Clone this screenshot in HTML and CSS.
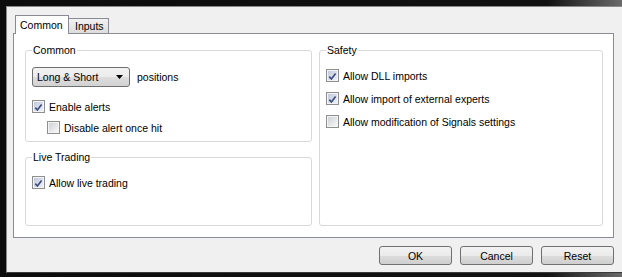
FILE: index.html
```html
<!DOCTYPE html>
<html lang="en">
<head>
    <meta charset="UTF-8">
    <meta name="viewport" content="width=device-width, initial-scale=1.0">
    <title>Expert Properties</title>
    <link rel="stylesheet" href="styles.css">
</head>
<body>
    <div class="window">
        <div class="tabs">
            <div class="tab active">Common</div>
            <div class="tab">Inputs</div>
        </div>
        <div class="panel">
            <fieldset class="group common">
                <legend>Common</legend>
                <div class="select-row">
                    <div class="select">
                        <span>Long &amp; Short</span>
                        <svg class="arrow" width="7" height="4" viewBox="0 0 7 4"><path d="M0 0H7L3.5 4Z" fill="#000"/></svg>
                    </div>
                    <span>positions</span>
                </div>
                <label class="check">
                    <span class="box checked"><svg width="9" height="9" viewBox="0 0 9 9"><path d="M1.3 4.6L3.4 7L7.6 1.6" fill="none" stroke="#3c4d80" stroke-width="1.7"/></svg></span>
                    Enable alerts
                </label>
                <label class="check indent">
                    <span class="box"></span>
                    Disable alert once hit
                </label>
            </fieldset>

            <fieldset class="group safety">
                <legend>Safety</legend>
                <label class="check tall">
                    <span class="box checked"><svg width="9" height="9" viewBox="0 0 9 9"><path d="M1.3 4.6L3.4 7L7.6 1.6" fill="none" stroke="#3c4d80" stroke-width="1.7"/></svg></span>
                    Allow DLL imports
                </label>
                <label class="check tall">
                    <span class="box checked"><svg width="9" height="9" viewBox="0 0 9 9"><path d="M1.3 4.6L3.4 7L7.6 1.6" fill="none" stroke="#3c4d80" stroke-width="1.7"/></svg></span>
                    Allow import of external experts
                </label>
                <label class="check tall">
                    <span class="box"></span>
                    Allow modification of Signals settings
                </label>
            </fieldset>

            <fieldset class="group live">
                <legend>Live Trading</legend>
                <label class="check">
                    <span class="box checked"><svg width="9" height="9" viewBox="0 0 9 9"><path d="M1.3 4.6L3.4 7L7.6 1.6" fill="none" stroke="#3c4d80" stroke-width="1.7"/></svg></span>
                    Allow live trading
                </label>
            </fieldset>
        </div>
        <div class="buttons">
            <button>OK</button>
            <button>Cancel</button>
            <button>Reset</button>
        </div>
    </div>
</body>
</html>
```

FILE: styles.css
```css
body {
    margin: 0;
    height: 277px;
    overflow: hidden;
    background: linear-gradient(90deg, #0c0c0c 0%, #121212 88%, #6a6a6a 100%);
    font-family: "Liberation Sans", Arial, sans-serif;
    font-size: 10.5px;
    color: #000;
}
.window {
    margin: 6px 0 0 6px;
    padding: 8px 8px 7px 6px;
    background: #f0f0f0;
    border-top: 1px solid #8a8a8a;
    border-left: 1px solid #8a8a8a;
    border-bottom: 1px solid #3a3a3a;
}
.tabs {
    display: flex;
    align-items: flex-end;
    padding-left: 2px;
    position: relative;
    z-index: 1;
    line-height: 12px;
}
.tab {
    box-sizing: border-box;
    width: 40px;
    height: 15px;
    margin-bottom: 1px;
    padding: 1px 0 0 6px;
    border: 1px solid #898c95;
    border-left: none;
    border-bottom: none;
    background: linear-gradient(#f2f2f2, #dcdcdc);
}
.tab.active {
    width: 54px;
    height: 19px;
    margin-bottom: 0;
    padding: 3px 0 0 4px;
    border-left: 1px solid #898c95;
    background: #fff;
}
.panel {
    margin-top: -1px;
    height: 182px;
    padding: 10px 10px 11px 11px;
    background: #fff;
    border: 1px solid #898c95;
    display: grid;
    grid-template-columns: 287px 284px;
    grid-template-rows: 98px 75px;
    column-gap: 7px;
    row-gap: 9px;
}
.group {
    margin: 0;
    padding: 0 6px;
    min-width: 0;
    border: 1px solid #d9d9d9;
    border-radius: 3px;
}
.group legend {
    padding: 0 1px;
    line-height: 12px;
}
.common { grid-column: 1; grid-row: 1; }
.live { grid-column: 1; grid-row: 2; padding-top: 9px; }
.safety { grid-column: 2; grid-row: 1 / 3; padding-top: 8px; }

.select-row {
    display: flex;
    align-items: center;
    gap: 7px;
    margin-top: 11px;
    margin-bottom: 9px;
}
.select {
    box-sizing: border-box;
    width: 98px;
    height: 20px;
    display: flex;
    align-items: center;
    justify-content: space-between;
    padding: 0 6px 0 4px;
    border: 1px solid #707070;
    border-radius: 3px;
    background: linear-gradient(#f2f2f2 0%, #ebebeb 50%, #dddddd 51%, #d2d2d2 100%);
}
.arrow { display: block; }

.check {
    display: flex;
    align-items: center;
    height: 21px;
}
.check.tall { height: 23px; }
.check.indent { padding-left: 15px; }
.box {
    box-sizing: border-box;
    width: 13px;
    height: 13px;
    margin-right: 4px;
    padding: 1px;
    border: 1px solid #8e8f8f;
    background: linear-gradient(135deg, #cfd2d7, #f7f7f7) content-box, #f4f4f4;
}
.box.checked {
    background: linear-gradient(135deg, #c3c9dc, #eef0f7) content-box, #f4f4f4;
}
.box svg { display: block; margin: 1px 0 0 0; }

.buttons {
    display: flex;
    justify-content: flex-end;
    gap: 8px;
    margin-top: 8px;
}
button {
    box-sizing: border-box;
    width: 73px;
    height: 19px;
    padding: 0;
    font-family: inherit;
    font-size: 10.5px;
    color: #000;
    border: 1px solid #707070;
    border-radius: 3px;
    background: linear-gradient(#f2f2f2 0%, #ebebeb 50%, #dddddd 51%, #cfcfcf 100%);
}
```
